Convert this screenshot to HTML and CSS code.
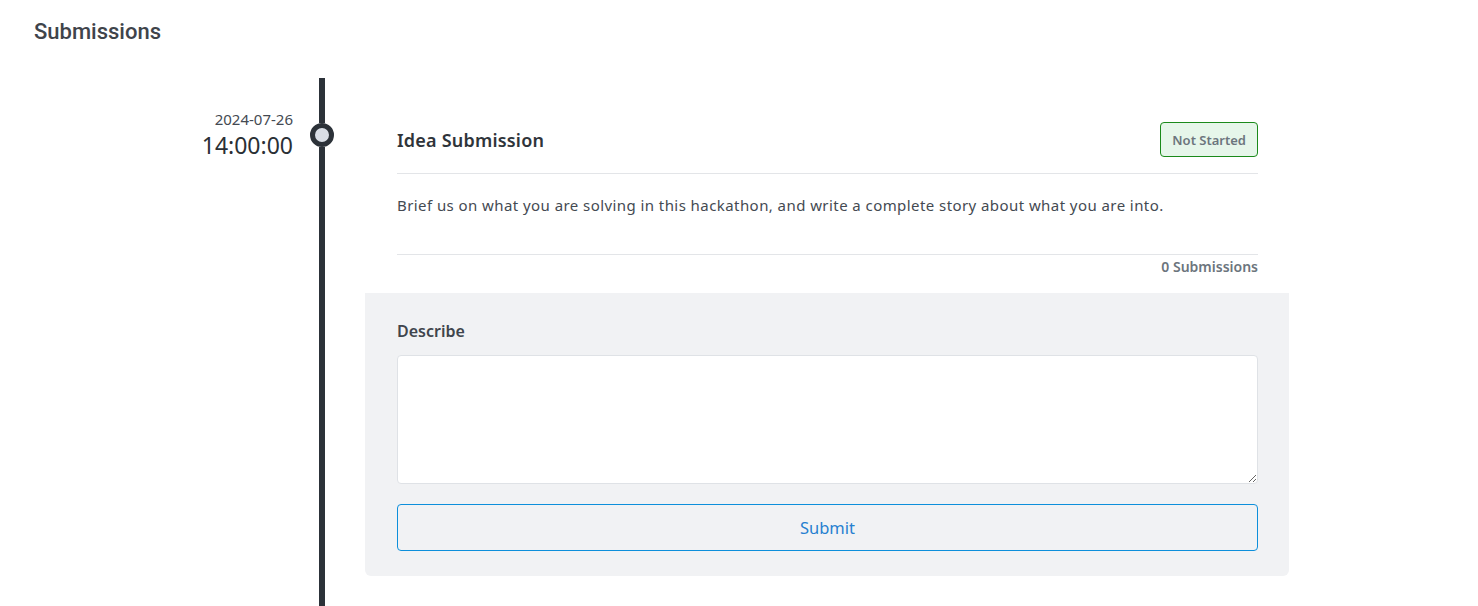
FILE: index.html
```html
<!DOCTYPE html>
<html lang="en">
<head>
<meta charset="utf-8">
<title>Submissions</title>
<link rel="stylesheet" href="styles.css">
</head>
<body>
<main class="page">
  <h2 class="page-title">Submissions</h2>
  <section class="timeline">
    <div class="when">
      <div class="when-date">2024-07-26</div>
      <div class="when-time">14:00:00</div>
    </div>
    <div class="rail">
      <div class="rail-top"></div>
      <div class="rail-dot"></div>
      <div class="rail-rest"></div>
    </div>
    <article class="card">
      <div class="card-body">
        <header class="card-head">
          <h3 class="card-title">Idea Submission</h3>
          <span class="badge">Not Started</span>
        </header>
        <p class="card-desc">Brief us on what you are solving in this hackathon, and write a complete story about what you are into.</p>
        <div class="card-count">0 Submissions</div>
      </div>
      <form class="card-form">
        <label class="form-label" for="describe">Describe</label>
        <textarea id="describe" class="form-text"></textarea>
        <button type="button" class="btn-submit">Submit</button>
      </form>
    </article>
  </section>
</main>
</body>
</html>
```

FILE: styles.css
```css
* { box-sizing: border-box; }
html, body { margin: 0; padding: 0; background: #fff; }
body {
  font-family: "Noto Sans", "Open Sans", sans-serif;
  color: #444a52;
  overflow: hidden;
  height: 606px;
}
.page {
  padding: 18px 0 0 34px;
  height: 100%;
  display: flex;
  flex-direction: column;
}
.page-title {
  margin: 0;
  font-family: Roboto, "Noto Sans", sans-serif;
  font-weight: 500;
  font-size: 22px;
  line-height: 28px;
  color: #3f444b;
}
.timeline {
  margin-top: 32px;
  display: flex;
  flex: 1;
  align-items: stretch;
}
.when {
  width: 259px;
  padding-top: 31px;
  text-align: right;
}
.when-date {
  font-size: 15px;
  line-height: 20px;
  color: #444a52;
}
.when-time {
  font-size: 23px;
  line-height: 28px;
  color: #2a2f35;
  margin-top: 2px;
}
.rail {
  width: 58px;
  display: flex;
  flex-direction: column;
  align-items: center;
}
.rail-top { width: 6px; height: 45px; background: #2c3239; }
.rail-dot {
  width: 24px;
  height: 24px;
  border-radius: 50%;
  border: 5px solid #2c3239;
  background: #d9dee6;
}
.rail-rest { width: 6px; flex: 1; background: #2c3239; }
.card {
  margin-left: 14px;
  width: 924px;
  align-self: flex-start;
}
.card-body {
  padding: 44px 31px 17px 32px;
}
.card-head {
  display: flex;
  align-items: center;
  justify-content: space-between;
  padding-bottom: 16px;
  border-bottom: 1px solid #e3e5e8;
}
.card-title {
  margin: 0;
  font-size: 18px;
  font-weight: 600;
  letter-spacing: 0.2px;
  color: #2f343a;
}
.badge {
  display: inline-flex;
  align-items: center;
  height: 35px;
  padding: 0 11px;
  background: #e6f6ea;
  border: 1px solid #1b8a1b;
  border-radius: 4px;
  font-size: 13px;
  font-weight: 600;
  color: #6c757d;
}
.card-desc {
  margin: 0;
  padding: 20px 0 38px;
  font-size: 15px;
  line-height: 22px;
  letter-spacing: 0.43px;
  border-bottom: 1px solid #e3e5e8;
}
.card-count {
  text-align: right;
  font-size: 14px;
  font-weight: 600;
  line-height: 20px;
  margin-top: 2px;
  margin-bottom: -1px;
  color: #6c757d;
}
.card-form {
  background: #f1f2f4;
  border-radius: 0 0 6px 6px;
  padding: 26px 31px 25px 32px;
  display: flex;
  flex-direction: column;
}
.form-label {
  font-size: 16px;
  font-weight: 600;
  line-height: 24px;
  color: #40454c;
}
.form-text {
  margin-top: 12px;
  height: 129px;
  border: 1px solid #dfe2e6;
  border-radius: 4px;
  background: #fff;
  font-family: inherit;
}
.btn-submit {
  margin-top: 20px;
  height: 47px;
  border: 1px solid #0d8fdb;
  border-radius: 4px;
  background: transparent;
  font-family: inherit;
  font-size: 16.5px;
  color: #2680d0;
}
```
